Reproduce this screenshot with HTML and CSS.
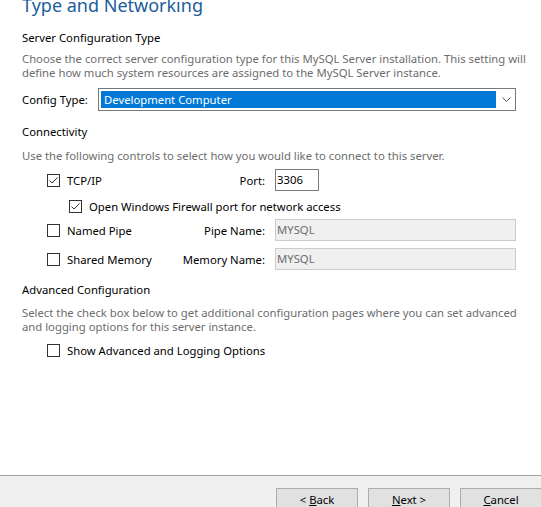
FILE: index.html
```html
<!DOCTYPE html>
<html lang="en">
<head>
    <meta charset="UTF-8">
    <title>Type and Networking</title>
    <link rel="stylesheet" href="styles.css">
</head>
<body>
    <div class="page">
        <div class="content">
            <h1 class="title">Type and Networking</h1>

            <h2 class="section-title">Server Configuration Type</h2>
            <p class="hint">Choose the correct server configuration type for this MySQL Server installation. This setting will<br>define how much system resources are assigned to the MySQL Server instance.</p>
            <div class="config-row">
                <label class="config-label">Config Type:</label>
                <div class="combo">
                    <span class="combo-value">Development Computer</span>
                    <svg class="combo-arrow" width="9" height="5" viewBox="0 0 9 5"><path d="M0.5 0.5 L4.5 4.5 L8.5 0.5" fill="none" stroke="#555" stroke-width="1"/></svg>
                </div>
            </div>

            <h2 class="section-title conn-title">Connectivity</h2>
            <p class="hint conn-hint">Use the following controls to select how you would like to connect to this server.</p>

            <div class="conn-row tcp-row">
                <div class="conn-left">
                    <span class="check"><svg width="11" height="11" viewBox="0 0 11 11"><path d="M1.5 5.5 L4 8 L9.5 2.5" fill="none" stroke="#333" stroke-width="1"/></svg></span>
                    <span class="check-label">TCP/IP</span>
                    <span class="field-label">Port:</span>
                </div>
                <div class="input port">3306</div>
            </div>
            <div class="conn-row firewall-row">
                <span class="check"><svg width="11" height="11" viewBox="0 0 11 11"><path d="M1.5 5.5 L4 8 L9.5 2.5" fill="none" stroke="#333" stroke-width="1"/></svg></span>
                <span class="check-label">Open Windows Firewall port for network access</span>
            </div>
            <div class="conn-row pipe-row">
                <div class="conn-left">
                    <span class="check"></span>
                    <span class="check-label">Named Pipe</span>
                    <span class="field-label">Pipe Name:</span>
                </div>
                <div class="input disabled">MYSQL</div>
            </div>
            <div class="conn-row memory-row">
                <div class="conn-left">
                    <span class="check"></span>
                    <span class="check-label">Shared Memory</span>
                    <span class="field-label">Memory Name:</span>
                </div>
                <div class="input disabled">MYSQL</div>
            </div>

            <h2 class="section-title adv-title">Advanced Configuration</h2>
            <p class="hint adv-hint">Select the check box below to get additional configuration pages where you can set advanced<br>and logging options for this server instance.</p>
            <div class="conn-row adv-row">
                <span class="check"></span>
                <span class="check-label">Show Advanced and Logging Options</span>
            </div>
        </div>

        <div class="footer">
            <button class="btn">&lt; <u>B</u>ack</button>
            <button class="btn"><u>N</u>ext &gt;</button>
            <button class="btn"><u>C</u>ancel</button>
        </div>
    </div>
</body>
</html>
```

FILE: styles.css
```css
body { margin: 0; font-family: "Noto Sans", "Open Sans", sans-serif; font-size: 11.3px; color: #000; background: #fff; overflow: hidden; }
.page { height: 507px; display: flex; flex-direction: column; overflow: hidden; }
.content { flex: 1; padding: 0 0 0 22px; }
.title { margin: -7px 0 0; font-size: 18px; font-weight: 400; line-height: 24px; color: #1b5e9b; height: 24px; }
.section-title { margin: 13px 0 0; font-size: 11.3px; font-weight: 400; line-height: 15px; }
.hint { margin: 7px 0 0; color: #6d6d6d; line-height: 14px; white-space: nowrap; }
.config-row { display: flex; align-items: center; margin-top: 8px; height: 23px; }
.config-label { width: 76px; }
.combo { width: 412px; height: 17px; border: 1px solid #7a7a7a; display: flex; align-items: center; padding: 2px; }
.combo-value { background: #0078d7; color: #fff; height: 17px; line-height: 17px; padding-left: 3px; width: 392px; }
.combo-arrow { margin-left: 6px; }
.conn-title { margin-top: 13px; }
.conn-hint { margin-top: 10px; }
.conn-row { display: flex; align-items: center; }
.conn-left { display: flex; align-items: center; width: 218px; }
.check { width: 11px; height: 11px; border: 1px solid #333; background: #fff; display: inline-flex; flex: none; margin-right: 7px; }
.check-label { white-space: nowrap; line-height: 13px; }
.field-label { margin-left: auto; }
.tcp-row { margin: 6px 0 0 25px; height: 22px; }
.firewall-row { margin: 9px 0 0 47px; height: 13px; }
.pipe-row { margin: 6px 0 0 25px; height: 22px; }
.memory-row { margin: 7px 0 0 25px; height: 22px; }
.input { height: 20px; line-height: 20px; border: 1px solid #7a7a7a; padding: 0 1px; margin-left: 10px; }
.input.port { width: 40px; }
.input.disabled { width: 237px; border: 1px solid #cccccc; background: #f0f0f0; color: #6d6d6d; }
.adv-title { margin-top: 12px; }
.adv-hint { margin-top: 9px; }
.adv-row { margin: 10px 0 0 25px; height: 13px; }
.footer { height: 32px; box-sizing: border-box; flex: none; border-top: 1px solid #a0a0a0; background: #f0f0f0; display: flex; justify-content: flex-end; align-items: flex-start; padding: 12px 0 0; gap: 10px; margin-right: -1px; }
.btn { width: 82px; height: 23px; border: 1px solid #adadad; background: #e1e1e1; font-family: inherit; font-size: 11.3px; padding: 0; color: #000; flex: none; }
```
